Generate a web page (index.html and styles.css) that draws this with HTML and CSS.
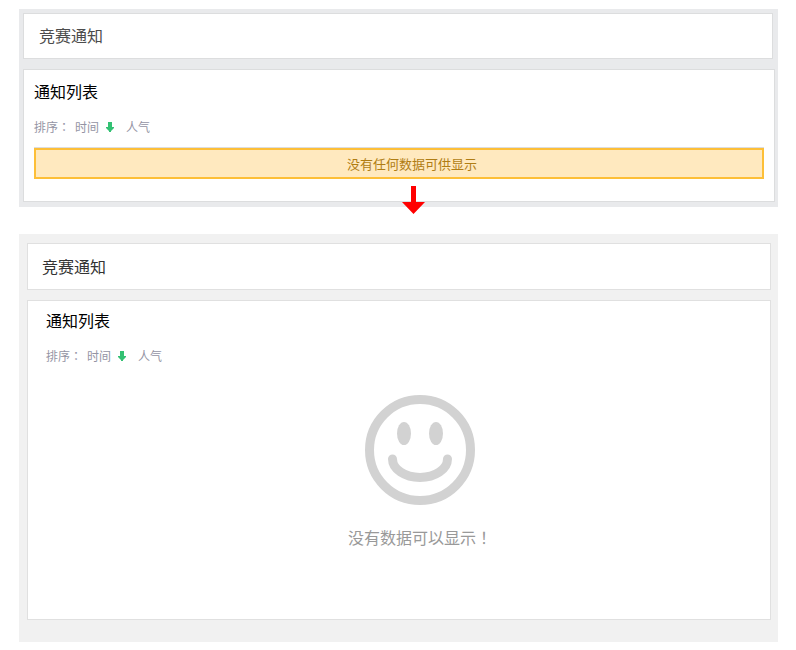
FILE: index.html
```html
<!DOCTYPE html>
<html lang="zh-CN">
<head>
	<meta charset="utf-8">
	<meta name="viewport" content="width=device-width,initial-scale=1.0">
	<title>竞赛通知</title>
	<link rel="stylesheet" href="styles.css">
</head>
<body>
	<!-- old list -->
	<section class="panel panel-old">
		<header class="box page-title">
			<h1>竞赛通知</h1>
		</header>
		<div class="box notice">
			<h2>通知列表</h2>
			<div class="sort">
				<span>排序：</span>
				<a href="#" class="sort-time">时间
					<svg class="sort-icon" viewBox="0 0 8 10"><path d="M2 0h4v5h2v1L5 9v1H3V9L0 6V5h2z"/></svg>
				</a>
				<a href="#">人气</a>
			</div>
			<div class="alert">没有任何数据可供显示</div>
		</div>
		<svg class="arrow" viewBox="0 0 23 28"><path d="M9 0h5v16h9L11.5 28 0 16h9z"/></svg>
	</section>

	<!-- new list with empty state -->
	<section class="panel panel-new">
		<header class="box page-title">
			<h1>竞赛通知</h1>
		</header>
		<div class="box notice">
			<h2>通知列表</h2>
			<div class="sort">
				<span>排序：</span>
				<a href="#" class="sort-time">时间
					<svg class="sort-icon" viewBox="0 0 8 10"><path d="M2 0h4v5h2v1L5 9v1H3V9L0 6V5h2z"/></svg>
				</a>
				<a href="#">人气</a>
			</div>
			<div class="empty">
				<svg class="smile" viewBox="0 0 110 110">
					<circle class="line" cx="55" cy="55" r="50.5"/>
					<ellipse cx="39" cy="38.5" rx="7" ry="11.5"/>
					<ellipse cx="71" cy="38.5" rx="7" ry="11.5"/>
					<path class="line" d="M27.5 64A27.5 18.5 0 0 0 82.5 64"/>
				</svg>
				<p>没有数据可以显示！</p>
			</div>
		</div>
	</section>
</body>
</html>
```

FILE: styles.css
```css
* {
	margin: 0;
	padding: 0;
	box-sizing: border-box;
}
body {
	padding: 9px 18px 8px 19px;
	background: #fff;
	font-family: "Noto Sans CJK SC", sans-serif;
	font-weight: 400;
}
a {
	color: inherit;
	text-decoration: none;
}
h1, h2 {
	font-size: 16px;
	line-height: 24px;
	font-weight: 400;
}
h1 {
	color: #333;
}
h2 {
	color: #000;
}
.panel {
	display: flex;
	flex-direction: column;
	gap: 10px;
}
.panel-old {
	position: relative;
	padding: 4px 3px 5px 4px;
	background: #e9eaec;
}
.panel-new {
	margin-top: 27px;
	padding: 9px 7px 22px 8px;
	background: #f1f1f1;
}
.box {
	background: #fff;
	border: 1px solid #dcddde;
}
.panel-new .box {
	border-color: #e0e0e0;
}
.page-title {
	padding: 9px 15px 11px;
}
.panel-old .page-title {
	margin-right: 2px;
}
.panel-old h1 {
	color: #4c4c4c;
}
.panel-new .page-title {
	padding: 10px 14px 11px;
}
.notice {
	padding: 9px 10px 22px;
}
.panel-new .notice {
	min-height: 320px;
	padding: 7px 18px;
}
/* TC face keeps the full-width punctuation centred */
.sort, .empty {
	font-family: "Noto Sans CJK TC", sans-serif;
	font-feature-settings: "locl" 0;
}
.sort {
	display: flex;
	align-items: center;
	margin-top: 15px;
	font-size: 12px;
	line-height: 18px;
	color: #9494a4;
}
.sort span {
	margin-right: 5px;
}
.sort-time {
	display: flex;
	align-items: center;
	gap: 7px;
	margin-right: 12px;
}
.sort-icon {
	width: 8px;
	height: 10px;
	fill: #33c173;
}
.alert {
	margin-top: 12px;
	padding-left: 26px;
	border: 2px solid #fdbf38;
	box-shadow: 0 -1px #dcddde;
	background: #ffe9bf;
	color: #b07d14;
	font-size: 13px;
	line-height: 27px;
	text-align: center;
}
.arrow {
	position: absolute;
	left: calc(50% + 3px);
	bottom: -7px;
	width: 23px;
	height: 28px;
	fill: #f00;
}
.empty {
	display: flex;
	flex-direction: column;
	align-items: center;
	gap: 20px;
	margin-top: 30px;
	padding-left: 42px;
	font-size: 16px;
	line-height: 24px;
	color: #999;
}
.smile {
	width: 110px;
	height: 110px;
	fill: #d2d2d2;
}
.smile .line {
	fill: none;
	stroke: #d2d2d2;
	stroke-width: 9;
	stroke-linecap: round;
}
```
